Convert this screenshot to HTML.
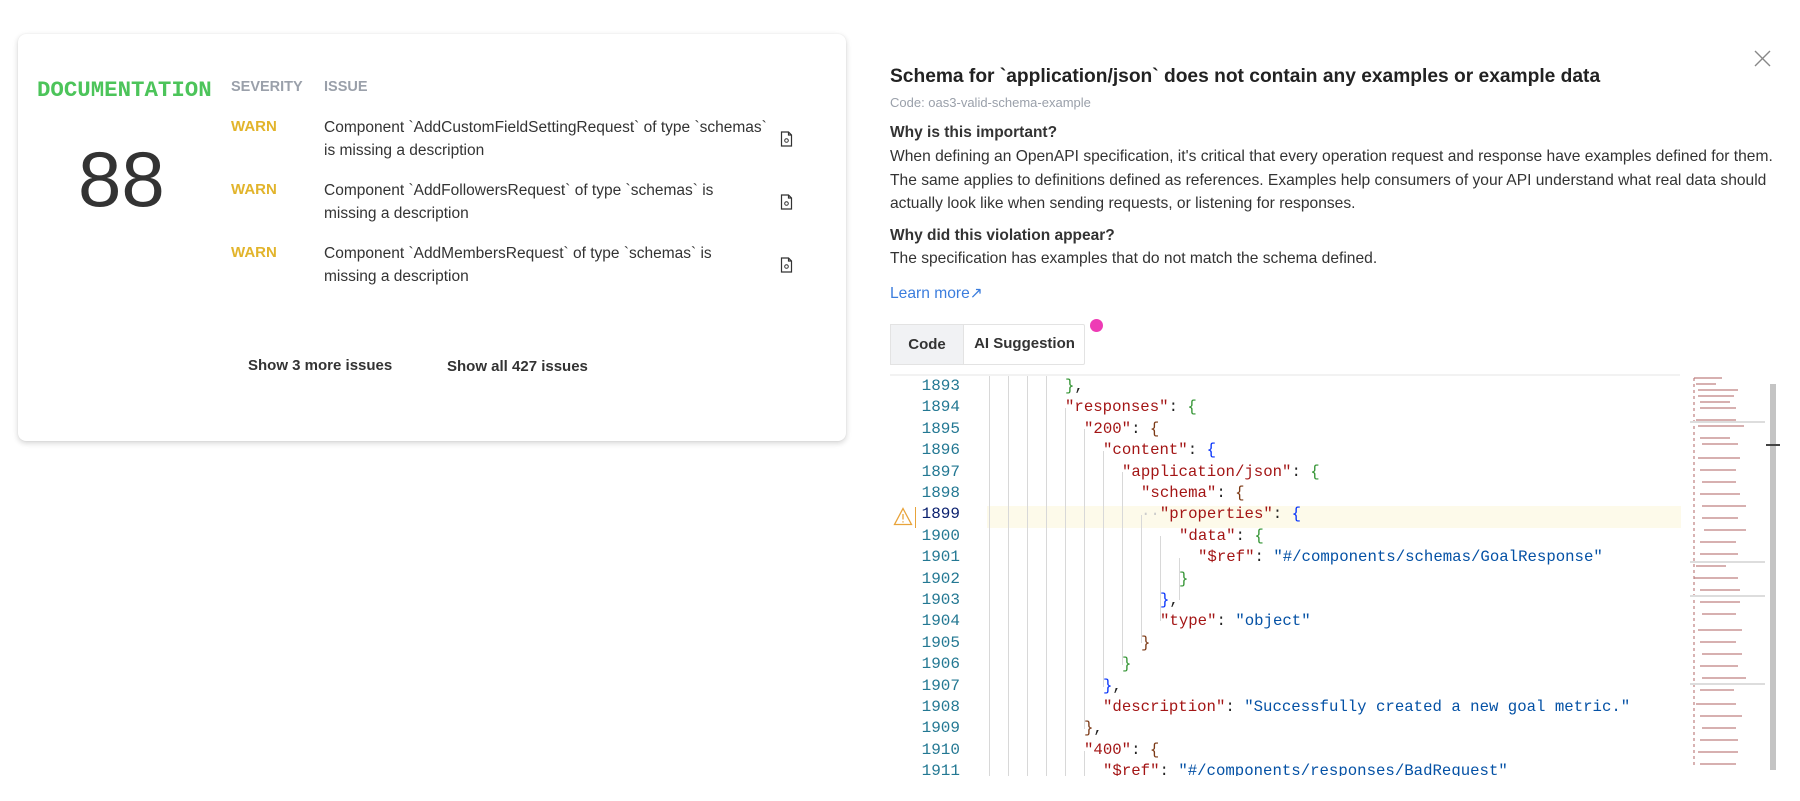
<!DOCTYPE html>
<html><head><meta charset="utf-8"><style>
*{margin:0;padding:0;box-sizing:border-box}
body{width:1800px;height:801px;background:#fff;font-family:"Liberation Sans",sans-serif;color:#222;position:relative;overflow:hidden}
.abs{position:absolute;white-space:nowrap}
.card{position:absolute;left:18px;top:34px;width:828px;height:407px;border-radius:8px;box-shadow:0 2px 6px rgba(0,0,0,.18),0 0 1px rgba(0,0,0,.1);background:#fff}
.warn{color:#e2b42b;font-weight:bold;font-size:15px}
.iss{font-size:15.5px;line-height:23px;color:#333}
.hdr{font-size:14.5px;font-weight:bold;color:#9aa0aa}
.doc{width:13px;height:16px;position:absolute}
.p{font-size:16px;color:#333}
.code{position:absolute;left:890px;top:376px;width:876px;height:400px;overflow:hidden;font-family:"Liberation Mono","DejaVu Sans Mono",monospace;font-size:15.7px}
.ln{position:absolute;left:0;width:70px;text-align:right;color:#237893;height:21.4px;line-height:21.4px;font-size:16px}
.cl{position:absolute;left:99px;height:21.4px;line-height:21.4px;white-space:pre}
.k{color:#a31515}.s{color:#0451a5}.g{color:#319331}.b{color:#0431fa}.o{color:#7b3814}
.guide{position:absolute;width:1px;background:#d8d8d8}
</style></head><body>
<div class="card"></div>
<div class="abs" style="left:37px;top:77px;font-family:'Liberation Mono',monospace;font-weight:bold;font-size:22.4px;color:#4cc45a">DOCUMENTATION</div>
<div class="abs" style="left:78px;top:134px;font-size:78px;color:#333">88</div>
<div class="abs hdr" style="left:231px;top:79px">SEVERITY</div>
<div class="abs hdr" style="left:324px;top:79px">ISSUE</div>

<div class="abs warn" style="left:231px;top:118px">WARN</div>
<div class="abs iss" style="left:324px;top:116px">Component `AddCustomFieldSettingRequest` of type `schemas`<br>is missing a description</div>
<div class="abs warn" style="left:231px;top:181px">WARN</div>
<div class="abs iss" style="left:324px;top:179px">Component `AddFollowersRequest` of type `schemas` is<br>missing a description</div>
<div class="abs warn" style="left:231px;top:244px">WARN</div>
<div class="abs iss" style="left:324px;top:242px">Component `AddMembersRequest` of type `schemas` is<br>missing a description</div>
<svg class="doc" style="left:780px;top:131px" viewBox="0 0 13 16"><path d="M1.5 1h7l3 3v11h-10z M8.5 1v3h3" fill="none" stroke="#333" stroke-width="1.2"/><circle cx="6.5" cy="9.5" r="1.8" fill="none" stroke="#333"/></svg>
<svg class="doc" style="left:780px;top:194px" viewBox="0 0 13 16"><path d="M1.5 1h7l3 3v11h-10z M8.5 1v3h3" fill="none" stroke="#333" stroke-width="1.2"/><circle cx="6.5" cy="9.5" r="1.8" fill="none" stroke="#333"/></svg>
<svg class="doc" style="left:780px;top:257px" viewBox="0 0 13 16"><path d="M1.5 1h7l3 3v11h-10z M8.5 1v3h3" fill="none" stroke="#333" stroke-width="1.2"/><circle cx="6.5" cy="9.5" r="1.8" fill="none" stroke="#333"/></svg>
<div class="abs" style="left:248px;top:357px;font-size:15px;font-weight:bold;color:#333">Show 3 more issues</div>
<div class="abs" style="left:447px;top:358px;font-size:15px;font-weight:bold;color:#333">Show all 427 issues</div>

<svg class="abs" style="left:1754px;top:50px" width="17" height="17" viewBox="0 0 17 17"><path d="M1 1L16 16M16 1L1 16" stroke="#888" stroke-width="1.4"/></svg>
<div class="abs" style="left:890px;top:66px;font-size:19.2px;font-weight:bold;color:#222">Schema for `application/json` does not contain any examples or example data</div>
<div class="abs" style="left:890px;top:95px;font-size:13px;color:#9aa0aa">Code: oas3-valid-schema-example</div>
<div class="abs p" style="left:890px;top:124px;font-weight:bold;font-size:15.5px">Why is this important?</div>
<div class="abs p" style="left:890px;top:145px;line-height:23.5px;font-size:15.6px">When defining an OpenAPI specification, it's critical that every operation request and response have examples defined for them.<br>The same applies to definitions defined as references. Examples help consumers of your API understand what real data should<br>actually look like when sending requests, or listening for responses.</div>
<div class="abs p" style="left:890px;top:227px;font-weight:bold;font-size:15.5px">Why did this violation appear?</div>
<div class="abs p" style="left:890px;top:250px;font-size:15.6px">The specification has examples that do not match the schema defined.</div>
<div class="abs" style="left:890px;top:284px;font-size:15.6px;color:#3b7ddd">Learn more↗</div>

<div class="abs" style="left:890px;top:324px;width:195px;height:41px;border:1px solid #e3e3e3;border-radius:2px"></div>
<div class="abs" style="left:890px;top:324px;width:74px;height:41px;background:#f1f2f4;border:1px solid #e3e3e3;font-size:15px;font-weight:bold;line-height:39px;text-align:center;color:#333">Code</div>
<div class="abs" style="left:964px;top:324px;width:121px;height:41px;font-size:15px;font-weight:bold;line-height:40px;text-align:center;color:#333">AI Suggestion</div>
<div class="abs" style="left:1090px;top:319px;width:13px;height:13px;border-radius:50%;background:#ee3bb5"></div>

<div class="abs" style="left:890px;top:374px;width:790px;height:2px;background:#f2f2f2"></div>
<div class="code">
<div class="abs" style="left:97px;top:130px;width:694px;height:22px;background:#fdfaea"></div>
<div class="guide" style="left:99px;top:0;height:400px"></div>
<div class="guide" style="left:118px;top:0;height:400px"></div>
<div class="guide" style="left:137px;top:0;height:400px"></div>
<div class="guide" style="left:156px;top:0;height:400px"></div>
<div class="guide" style="left:175px;top:32px;height:400px"></div>
<div class="guide" style="left:194px;top:53px;height:300px"></div>
<div class="guide" style="left:213px;top:75px;height:236px"></div>
<div class="guide" style="left:232px;top:96px;height:193px"></div>
<div class="guide" style="left:251px;top:139px;height:128px"></div>
<div class="guide" style="left:270px;top:160px;height:85px"></div>
<div class="guide" style="left:289px;top:182px;height:42px"></div>
<div class="guide" style="left:194px;top:375px;height:30px"></div>
<svg class="abs" style="left:3px;top:131px" width="20" height="19" viewBox="0 0 20 19"><path d="M10 1.5L18.5 17.5H1.5z" fill="none" stroke="#e8a33a" stroke-width="1.3"/><path d="M10 7v5.5M10 14.2v1.3" stroke="#e8a33a" stroke-width="1.3"/></svg>
<div class="abs" style="left:25px;top:131px;width:1px;height:21px;background:#e8a33a"></div>
<div class="ln" style="top:0">1893</div><div class="cl" style="top:0;left:175px"><span class="g">}</span>,</div>
<div class="ln" style="top:21.4px">1894</div><div class="cl" style="top:21.4px;left:175px"><span class="k">"responses"</span>: <span class="g">{</span></div>
<div class="ln" style="top:42.8px">1895</div><div class="cl" style="top:42.8px;left:194px"><span class="k">"200"</span>: <span class="o">{</span></div>
<div class="ln" style="top:64.2px">1896</div><div class="cl" style="top:64.2px;left:213px"><span class="k">"content"</span>: <span class="b">{</span></div>
<div class="ln" style="top:85.6px">1897</div><div class="cl" style="top:85.6px;left:232px"><span class="k">"application/json"</span>: <span class="g">{</span></div>
<div class="ln" style="top:107px">1898</div><div class="cl" style="top:107px;left:251px"><span class="k">"schema"</span>: <span class="o">{</span></div>
<div class="ln" style="top:128.4px;color:#0b216f">1899</div><div class="cl" style="top:128.4px;left:251px"><span style="color:#ccc">··</span><span class="k">"properties"</span>: <span class="b">{</span></div>
<div class="ln" style="top:149.8px">1900</div><div class="cl" style="top:149.8px;left:289px"><span class="k">"data"</span>: <span class="g">{</span></div>
<div class="ln" style="top:171.2px">1901</div><div class="cl" style="top:171.2px;left:308px"><span class="k">"$ref"</span>: <span class="s">"#/components/schemas/GoalResponse"</span></div>
<div class="ln" style="top:192.6px">1902</div><div class="cl" style="top:192.6px;left:289px"><span class="g">}</span></div>
<div class="ln" style="top:214px">1903</div><div class="cl" style="top:214px;left:270px"><span class="b">}</span>,</div>
<div class="ln" style="top:235.4px">1904</div><div class="cl" style="top:235.4px;left:270px"><span class="k">"type"</span>: <span class="s">"object"</span></div>
<div class="ln" style="top:256.8px">1905</div><div class="cl" style="top:256.8px;left:251px"><span class="o">}</span></div>
<div class="ln" style="top:278.2px">1906</div><div class="cl" style="top:278.2px;left:232px"><span class="g">}</span></div>
<div class="ln" style="top:299.6px">1907</div><div class="cl" style="top:299.6px;left:213px"><span class="b">}</span>,</div>
<div class="ln" style="top:321px">1908</div><div class="cl" style="top:321px;left:213px"><span class="k">"description"</span>: <span class="s">"Successfully created a new goal metric."</span></div>
<div class="ln" style="top:342.4px">1909</div><div class="cl" style="top:342.4px;left:194px"><span class="o">}</span>,</div>
<div class="ln" style="top:363.8px">1910</div><div class="cl" style="top:363.8px;left:194px"><span class="k">"400"</span>: <span class="o">{</span></div>
<div class="ln" style="top:385.2px">1911</div><div class="cl" style="top:385.2px;left:213px"><span class="k">"$ref"</span>: <span class="s">"#/components/responses/BadRequest"</span></div>
</div>
<svg class="abs" style="left:1690px;top:374px" width="76" height="400" viewBox="0 0 76 400">
<g stroke="#b46a6a" stroke-width="1.2" opacity=".85">
<path d="M4 4h28M6 10h20M8 16h40M8 22h36M10 28h30M10 34h36M6 46h40M8 52h46M10 64h30M12 70h36M8 84h42M10 96h36M12 108h34M10 120h40M12 132h44M12 144h36M14 156h42M10 168h36M10 180h38M6 192h30M4 204h44M10 216h40M10 228h40M12 240h34M8 256h44M10 268h36M12 280h40M10 292h38M12 304h44M10 316h34M6 330h40M10 342h42M12 354h34M10 366h38M8 378h40M10 390h36"/>
<path d="M4 4v390" stroke-dasharray="3 3"/>
</g>
<path d="M0 48h75M0 188h75M0 222h75M0 310h75" stroke="#ddd" stroke-width="2"/>
</svg>
<div class="abs" style="left:1770px;top:384px;width:6px;height:386px;background:#c4c4c4"></div>
<div class="abs" style="left:1766px;top:444px;width:14px;height:2px;background:#444"></div>
</body></html>
